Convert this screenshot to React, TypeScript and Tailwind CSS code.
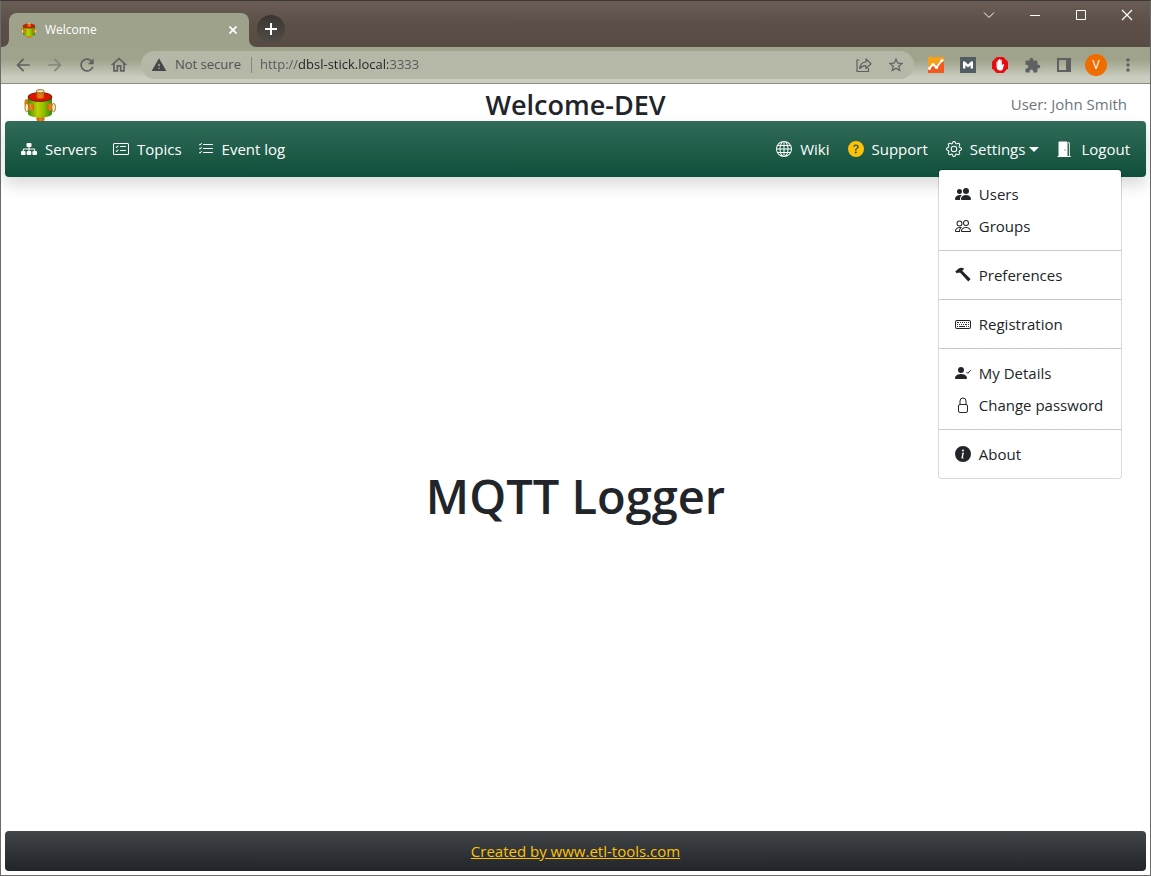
import { useState } from "react";
import type { ReactNode } from "react";
import {
  BsCardChecklist,
  BsGear,
  BsGlobe,
  BsInfoCircleFill,
  BsKeyboard,
  BsListCheck,
  BsPeople,
  BsPeopleFill,
  BsQuestionCircleFill,
} from "react-icons/bs";
import {
  MdArrowBack,
  MdArrowForward,
  MdExtension,
  MdMoreVert,
  MdOutlineHome,
  MdRefresh,
  MdStarBorder,
  MdWarning,
} from "react-icons/md";

function Keg({ size }: { size: number }) {
  return (
    <svg width={size} height={size} viewBox="0 0 32 32" aria-hidden="true">
      <defs>
        <linearGradient id="kegBody" x1="0" x2="1" y1="0" y2="0">
          <stop offset="0" stopColor="#3f8f0a" />
          <stop offset="0.4" stopColor="#bfd000" />
          <stop offset="0.65" stopColor="#8fc000" />
          <stop offset="1" stopColor="#2f8a12" />
        </linearGradient>
        <linearGradient id="kegPipe" x1="0" x2="1" y1="0" y2="0">
          <stop offset="0" stopColor="#e0560a" />
          <stop offset="0.5" stopColor="#dd8a18" />
          <stop offset="1" stopColor="#d8600c" />
        </linearGradient>
      </defs>
      <rect x="12.5" y="26" width="8" height="6" rx="1.5" fill="url(#kegPipe)" />
      <ellipse cx="3" cy="14" rx="2.6" ry="4" fill="#e07a10" />
      <path d="M4 8v16.500c0 5.500 24 5.500 24 0V8z" fill="url(#kegBody)" />
      <ellipse cx="16" cy="8" rx="12" ry="4.500" fill="#dc1400" stroke="#4d2408" strokeWidth="0.8" />
      <rect x="12.5" y="2" width="7.5" height="7.5" rx="1.5" fill="url(#kegPipe)" />
      <ellipse cx="16.2" cy="2.200" rx="4" ry="1.7" fill="#f7e3a0" stroke="#7a5a28" strokeWidth="0.8" />
      <rect x="3" y="14.500" width="7" height="7" rx="2" fill="url(#kegPipe)" />
      <ellipse cx="2.800" cy="18.6" rx="1.9" ry="4.2" fill="#fbeaa8" stroke="#8a5a20" strokeWidth="0.8" />
      <rect x="23" y="14.500" width="7" height="7" rx="2" fill="url(#kegPipe)" />
      <ellipse cx="29.600" cy="18.6" rx="1.9" ry="4.2" fill="#fbeaa8" stroke="#8a5a20" strokeWidth="0.8" />
    </svg>
  );
}

function Sitemap() {
  return (
    <svg width="16" height="16" viewBox="0 0 16 16" fill="currentColor" aria-hidden="true">
      <rect x="5.5" y="2" width="5" height="4" rx="1" />
      <rect x="0" y="10" width="4.6" height="4" rx="1" />
      <rect x="5.7" y="10" width="4.6" height="4" rx="1" />
      <rect x="11.4" y="10" width="4.6" height="4" rx="1" />
      <path d="M8 6v4M2.3 10V8h11.4v2" fill="none" stroke="currentColor" />
    </svg>
  );
}

function Door() {
  return (
    <svg width="16" height="16" viewBox="0 0 16 16" fill="currentColor" aria-hidden="true">
      <path
        fillRule="evenodd"
        d="M.5 15H1.500V1.4C1.500.8 1.900.5 2.400.5H9.600C10.200.5 10.500.9 10.500 1.400V15H13.800V15.9H.5zM8 8.300c-.3 0-.5.3-.5.7s.2.700.5.700.5-.3.5-.7-.2-.7-.5-.7z"
      />
      <path d="M11 1.200h.8c.6 0 1 .3 1 .9V15h-.9V2.200H11z" />
    </svg>
  );
}

function Hammer() {
  return (
    <svg width="16" height="16" viewBox="0 0 16 16" fill="currentColor" aria-hidden="true">
      <path d="M.3 4.5 3.7 1.5C5.5.4 8 .8 9.3 1.8L7.2 3.7l.8.9 7.6 7.5-2.3 2.4-7.4-7.9-1-1L4 6.1 3 5.4 1.8 6.4z" />
    </svg>
  );
}

function PersonCheck() {
  return (
    <svg width="16" height="16" viewBox="0 0 16 16" fill="currentColor" aria-hidden="true">
      <circle cx="6" cy="5" r="3" />
      <path d="M1 14s-1 0-1-1 1-4 6-4 6 3 6 4-1 1-1 1z" />
      <path d="m11.3 6.8 1.5 1.5 3-3.2" fill="none" stroke="currentColor" strokeWidth="1" />
    </svg>
  );
}

function Lock() {
  return (
    <svg width="16" height="16" viewBox="0 0 16 16" fill="none" stroke="currentColor" aria-hidden="true">
      <rect x="3.5" y="7.5" width="9" height="8" rx="1.5" />
      <path d="M5 7.5V4a3 3 0 0 1 6 0v3.5" />
    </svg>
  );
}

function Share() {
  return (
    <svg width="18" height="18" viewBox="0 0 18 18" fill="none" stroke="currentColor" strokeWidth="1.2" aria-hidden="true">
      <path d="M4.5 4H2v11.5h11.5V12" />
      <path d="M11 3v3C7.500 6.200 5 8.500 4.700 12.500 6.500 10.300 8.300 9.600 11 9.600v3L16 7.800z" strokeLinejoin="round" />
    </svg>
  );
}

function WindowButton({ label, children }: { label: string; children: ReactNode }) {
  return (
    <button type="button" aria-label={label} className="flex h-7 w-[46px] items-center justify-center text-white">
      <svg width="12" height="12" viewBox="0 0 12 12" fill="none" stroke="currentColor" aria-hidden="true">
        {children}
      </svg>
    </button>
  );
}

function ToolButton({ label, children }: { label: string; children: ReactNode }) {
  return (
    <button type="button" aria-label={label} className="flex size-8 items-center justify-center">
      {children}
    </button>
  );
}

function TabStrip() {
  return (
    <div className="flex h-[46px] items-end bg-linear-to-b from-[#695d56] via-[#5c4f47] to-[#584b43]">
      <div className="flex h-[34px] items-end">
        <svg width="8" height="8" viewBox="0 0 8 8" aria-hidden="true">
          <path d="M8 0v8H0c5 0 8-3 8-8z" fill="#9ea28b" />
        </svg>
        <div className="flex h-[34px] w-60 items-center rounded-t-lg bg-[#9ea28b] pr-2 pl-3 text-white">
          <Keg size={16} />
          <span className="ml-2 grow text-xs">Welcome</span>
          <button type="button" aria-label="Close tab" className="flex size-4 items-center justify-center">
            <svg width="8" height="8" viewBox="0 0 8 8" stroke="currentColor" strokeWidth="1.7" aria-hidden="true">
              <path d="m.5.5 7 7m0-7-7 7" />
            </svg>
          </button>
        </div>
        <svg width="8" height="8" viewBox="0 0 8 8" aria-hidden="true">
          <path d="M0 0v8h8C3 8 0 5 0 0z" fill="#9ea28b" />
        </svg>
      </div>
      <button
        type="button"
        aria-label="New tab"
        className="mb-1 flex size-7 items-center justify-center rounded-full bg-linear-to-b from-[#3a3631] to-[#504c47] text-white"
      >
        <svg width="12" height="12" viewBox="0 0 12 12" stroke="currentColor" strokeWidth="2" aria-hidden="true">
          <path d="M6 0v12M0 6h12" />
        </svg>
      </button>
      <div className="ml-auto flex self-start">
        <WindowButton label="Search tabs">
          <path d="m1 3.500 5 5 5-5" />
        </WindowButton>
        <WindowButton label="Minimize">
          <path d="M1 6.500h10" />
        </WindowButton>
        <WindowButton label="Maximize">
          <path d="M1.500 1.500h9v9h-9z" />
        </WindowButton>
        <WindowButton label="Close">
          <path d="m1 1 10 10M11 1 1 11" strokeWidth="1.200" />
        </WindowButton>
      </div>
    </div>
  );
}

function AddressBar() {
  const [url, setUrl] = useState("http://dbsl-stick.local:3333");
  return (
    <div className="flex h-[37px] items-center border-b border-[#8c8f7c] bg-linear-to-b from-[#9fa38b] from-35% to-[#cbcdc0] to-85% px-1.5 text-[#5f6062]">
      <ToolButton label="Back">
        <MdArrowBack size={20} />
      </ToolButton>
      <ToolButton label="Forward">
        <MdArrowForward size={20} className="text-[#84877a]" />
      </ToolButton>
      <ToolButton label="Reload">
        <MdRefresh size={20} />
      </ToolButton>
      <ToolButton label="Home">
        <MdOutlineHome size={20} />
      </ToolButton>
      <div className="ml-1.5 flex h-7 grow items-center rounded-full bg-[#b5b8a6] pr-0.5 pl-2.5 text-[13px]">
        <MdWarning size={16} className="text-[#44464a]" />
        <span className="ml-2 text-[#505254]">Not secure</span>
        <span className="mr-2 ml-2.5 h-4 w-px bg-[#85877b]" />
        <input
          type="text"
          aria-label="Address"
          value={url}
          onChange={(e) => setUrl(e.target.value)}
          className="min-w-0 grow bg-[linear-gradient(90deg,#54565a_38px,#202124_38px,#202124_128px,#54565a_128px)] bg-clip-text text-transparent caret-black outline-none"
        />
        <ToolButton label="Share">
          <Share />
        </ToolButton>
        <ToolButton label="Bookmark">
          <MdStarBorder size={18} />
        </ToolButton>
      </div>
      <div className="ml-1.5 flex">
        <ToolButton label="Analytics">
          <svg width="16" height="16" viewBox="0 0 16 16" aria-hidden="true">
            <rect width="16" height="16" rx="1" fill="#f9a01b" />
            <path d="M0 12 4 8l4 3 6-8 2 1v12H0z" fill="#f4591f" />
            <path d="m1 11.500 4-4 3.500 3L14 3.500" fill="none" stroke="#fff" strokeWidth="1.800" />
            <g fill="#fff">
              <circle cx="1.500" cy="11.500" r="1.500" />
              <circle cx="5" cy="7.500" r="1.500" />
              <circle cx="8.500" cy="10.500" r="1.600" />
              <circle cx="14" cy="3.500" r="1.600" />
            </g>
          </svg>
        </ToolButton>
        <ToolButton label="Mail extension">
          <svg width="16" height="16" viewBox="0 0 16 16" aria-hidden="true">
            <rect width="16" height="16" fill="#525d63" />
            <path d="M3 11.500V4.500h2l3 3 3-3h2v7h-2.400V8.200L8 10.600 5.400 8.200v3.300z" fill="#fff" />
          </svg>
        </ToolButton>
        <ToolButton label="Ad blocker">
          <svg width="16" height="16" viewBox="0 0 16 16" aria-hidden="true">
            <path d="M4.700 0h6.600L16 4.700v6.600L11.300 16H4.700L0 11.300V4.700z" fill="#e40d13" />
            <path
              d="M4.500 5c0-.8 1-.8 1.100 0l.2 2.500V3.400c0-.9 1.200-.9 1.300 0V7V2.600c0-.9 1.300-.9 1.300 0V7l.2-3.700c0-.8 1.200-.8 1.200 0v5.200l1-1.200c.6-.6 1.500-.2 1.200.5L10.800 12c-.5 1-1.200 1.500-2.400 1.500C6 13.500 4.800 12.500 4.600 10z"
              fill="#fff"
            />
          </svg>
        </ToolButton>
        <ToolButton label="Extensions">
          <MdExtension size={17} />
        </ToolButton>
        <ToolButton label="Side panel">
          <svg width="14" height="14" viewBox="0 0 14 14" aria-hidden="true">
            <path d="M0 0h14v14H0zm2 2v10h7V2z" fill="currentColor" fillRule="evenodd" />
          </svg>
        </ToolButton>
        <button type="button" aria-label="Profile" className="flex w-8 items-center justify-center">
          <span className="flex size-[22px] items-center justify-center rounded-full bg-[#ef6c00] text-xs text-white">V</span>
        </button>
        <ToolButton label="Menu">
          <MdMoreVert size={20} />
        </ToolButton>
      </div>
    </div>
  );
}

function NavLink({ icon, children }: { icon: ReactNode; children: ReactNode }) {
  return (
    <a href="#" className="flex h-10 items-center gap-2 px-2">
      {icon}
      <span>{children}</span>
    </a>
  );
}

const menuGroups = [
  [
    { label: "Users", icon: <BsPeopleFill size={16} /> },
    { label: "Groups", icon: <BsPeople size={16} /> },
  ],
  [{ label: "Preferences", icon: <Hammer /> }],
  [{ label: "Registration", icon: <BsKeyboard size={16} /> }],
  [
    { label: "My Details", icon: <PersonCheck /> },
    { label: "Change password", icon: <Lock /> },
  ],
  [{ label: "About", icon: <BsInfoCircleFill size={16} /> }],
];

function SettingsMenu() {
  const [open, setOpen] = useState(true);
  return (
    <div className="relative">
      <button
        type="button"
        aria-expanded={open}
        onClick={() => setOpen(!open)}
        className="flex h-10 items-center gap-2 px-2"
      >
        <BsGear size={16} />
        <span className="flex items-center gap-1">
          Settings
          <svg width="10" height="5" viewBox="0 0 10 5" fill="currentColor" aria-hidden="true">
            <path d="M0 0h10L5 5z" />
          </svg>
        </span>
      </button>
      {open && (
        <div className="absolute top-10 left-0 z-10 w-[184px] divide-y divide-[#c8c9ca] rounded border border-black/15 bg-white bg-clip-padding text-[#212529]">
          {menuGroups.map((group) => (
            <div key={group[0].label} className="py-2">
              {group.map((item) => (
                <a key={item.label} href="#" className="flex h-8 items-center gap-2 pl-4 whitespace-nowrap">
                  <span className="shrink-0">{item.icon}</span>
                  {item.label}
                </a>
              ))}
            </div>
          ))}
        </div>
      )}
    </div>
  );
}

export default function App() {
  return (
    <div className="flex min-h-screen flex-col border border-[#6b6b6b] border-t-[#3a3634] bg-white font-['Open_Sans','Noto_Sans',sans-serif] text-[#212529]">
      <TabStrip />
      <AddressBar />
      <div className="flex grow flex-col px-1 pb-1 text-[15px]">
        <header className="grid h-[37px] grid-cols-3 items-center px-[19px] pt-1">
          <Keg size={32} />
          <h2 className="text-center text-[27px] leading-8 font-semibold whitespace-nowrap">Welcome-DEV</h2>
          <span className="text-right text-[#6c757d]">User: John Smith</span>
        </header>
        <nav className="flex h-14 items-center justify-between rounded bg-linear-to-b from-[#306c59] to-[#0e4f3b] px-2 text-white shadow-[0_8px_16px_rgba(0,0,0,0.15)]">
          <div className="flex">
            <NavLink icon={<Sitemap />}>Servers</NavLink>
            <NavLink icon={<BsCardChecklist size={16} />}>Topics</NavLink>
            <NavLink icon={<BsListCheck size={16} />}>Event log</NavLink>
          </div>
          <div className="flex gap-0.5">
            <NavLink icon={<BsGlobe size={16} />}>Wiki</NavLink>
            <NavLink icon={<BsQuestionCircleFill size={16} className="text-[#ffc107]" />}>Support</NavLink>
            <SettingsMenu />
            <NavLink icon={<Door />}>Logout</NavLink>
          </div>
        </nav>
        <main className="flex grow items-center justify-center pb-4">
          <h1 className="text-[47px] font-semibold">MQTT Logger</h1>
        </main>
        <footer className="flex h-10 items-center justify-center rounded bg-linear-to-b from-[#424649] to-[#212529]">
          <a href="#" className="text-[#ffc107] underline">
            Created by www.etl-tools.com
          </a>
        </footer>
      </div>
    </div>
  );
}
